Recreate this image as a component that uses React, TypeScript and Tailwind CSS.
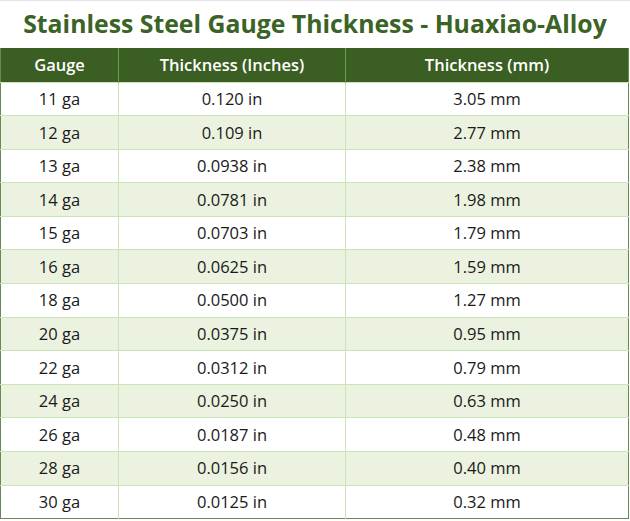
import React from "react";

const rows = [
  ["11 ga", "0.120 in", "3.05 mm"],
  ["12 ga", "0.109 in", "2.77 mm"],
  ["13 ga", "0.0938 in", "2.38 mm"],
  ["14 ga", "0.0781 in", "1.98 mm"],
  ["15 ga", "0.0703 in", "1.79 mm"],
  ["16 ga", "0.0625 in", "1.59 mm"],
  ["18 ga", "0.0500 in", "1.27 mm"],
  ["20 ga", "0.0375 in", "0.95 mm"],
  ["22 ga", "0.0312 in", "0.79 mm"],
  ["24 ga", "0.0250 in", "0.63 mm"],
  ["26 ga", "0.0187 in", "0.48 mm"],
  ["28 ga", "0.0156 in", "0.40 mm"],
  ["30 ga", "0.0125 in", "0.32 mm"],
];

export default function App() {
  return (
    <div className="w-[630px] h-[521px] bg-white font-['Open_Sans',sans-serif] border-t border-[#e4e4e4]">
      <h1 className="h-[47px] flex items-center justify-center text-[24.8px] font-bold text-[#3b6325] pb-[1px]">
        Stainless Steel Gauge Thickness - Huaxiao-Alloy
      </h1>
      <table className="w-[629px] border-collapse table-fixed border-x border-b border-[#6a8756] text-[16.5px]">
        <colgroup>
          <col className="w-[118px]" />
          <col className="w-[227px]" />
          <col />
        </colgroup>
        <thead>
          <tr className="h-[34px] bg-[#3b5e22] text-white">
            <th className="font-semibold border-r border-[#6f9a52] pt-[1px]">Gauge</th>
            <th className="font-semibold border-r border-[#6f9a52] pt-[1px]">Thickness (Inches)</th>
            <th className="font-semibold pt-[1px]">Thickness (mm)</th>
          </tr>
        </thead>
        <tbody className="text-[#1a1a1a]">
          {rows.map((r, i) => (
            <tr
              key={r[0]}
              className={`h-[33.6px] border-t border-[#c9e4b6] ${i % 2 === 1 ? "bg-[#ebf3e0]" : "bg-white"}`}
            >
              <td className="text-center border-r border-[#c9e4b6] pt-[1px]">{r[0]}</td>
              <td className="text-center border-r border-[#c9e4b6] pt-[1px]">{r[1]}</td>
              <td className="text-center pt-[1px]">{r[2]}</td>
            </tr>
          ))}
        </tbody>
      </table>
    </div>
  );
}
